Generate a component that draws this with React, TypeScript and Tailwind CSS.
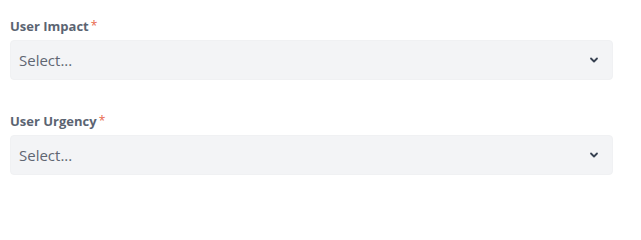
import React from 'react'

function Chevron() {
  return (
    <svg width="10" height="10" viewBox="0 0 10 10" fill="none" className="text-[#374151]">
      <path d="M2 3.5 L5 6.5 L8 3.5" stroke="currentColor" strokeWidth="1.8" strokeLinecap="round" strokeLinejoin="round" />
    </svg>
  )
}

function SelectField({ label }: { label: string }) {
  return (
    <div className="flex flex-col">
      <label className="text-[13px] leading-[18px] font-bold text-[#5b6472] mb-[5px]">
        {label}
        <span className="text-[12px] font-normal text-[#e8664c] ml-[2px] align-top">*</span>
      </label>
      <button
        type="button"
        className="flex items-center justify-between h-[40px] w-full rounded-[4px] bg-[#f3f4f6] border border-[#f0f1f3] pl-[8px] pr-[13px] text-left"
      >
        <span className="text-[15px] text-[#5f6672]">Select...</span>
        <Chevron />
      </button>
    </div>
  )
}

export default function App() {
  return (
    <div
      className="w-[641px] h-[200px] bg-white pt-[17px] pl-[10px] pr-[28px] flex flex-col gap-[32px]"
      style={{ fontFamily: '"Open Sans", "Noto Sans", sans-serif' }}
    >
      <SelectField label="User Impact" />
      <SelectField label="User Urgency" />
    </div>
  )
}
